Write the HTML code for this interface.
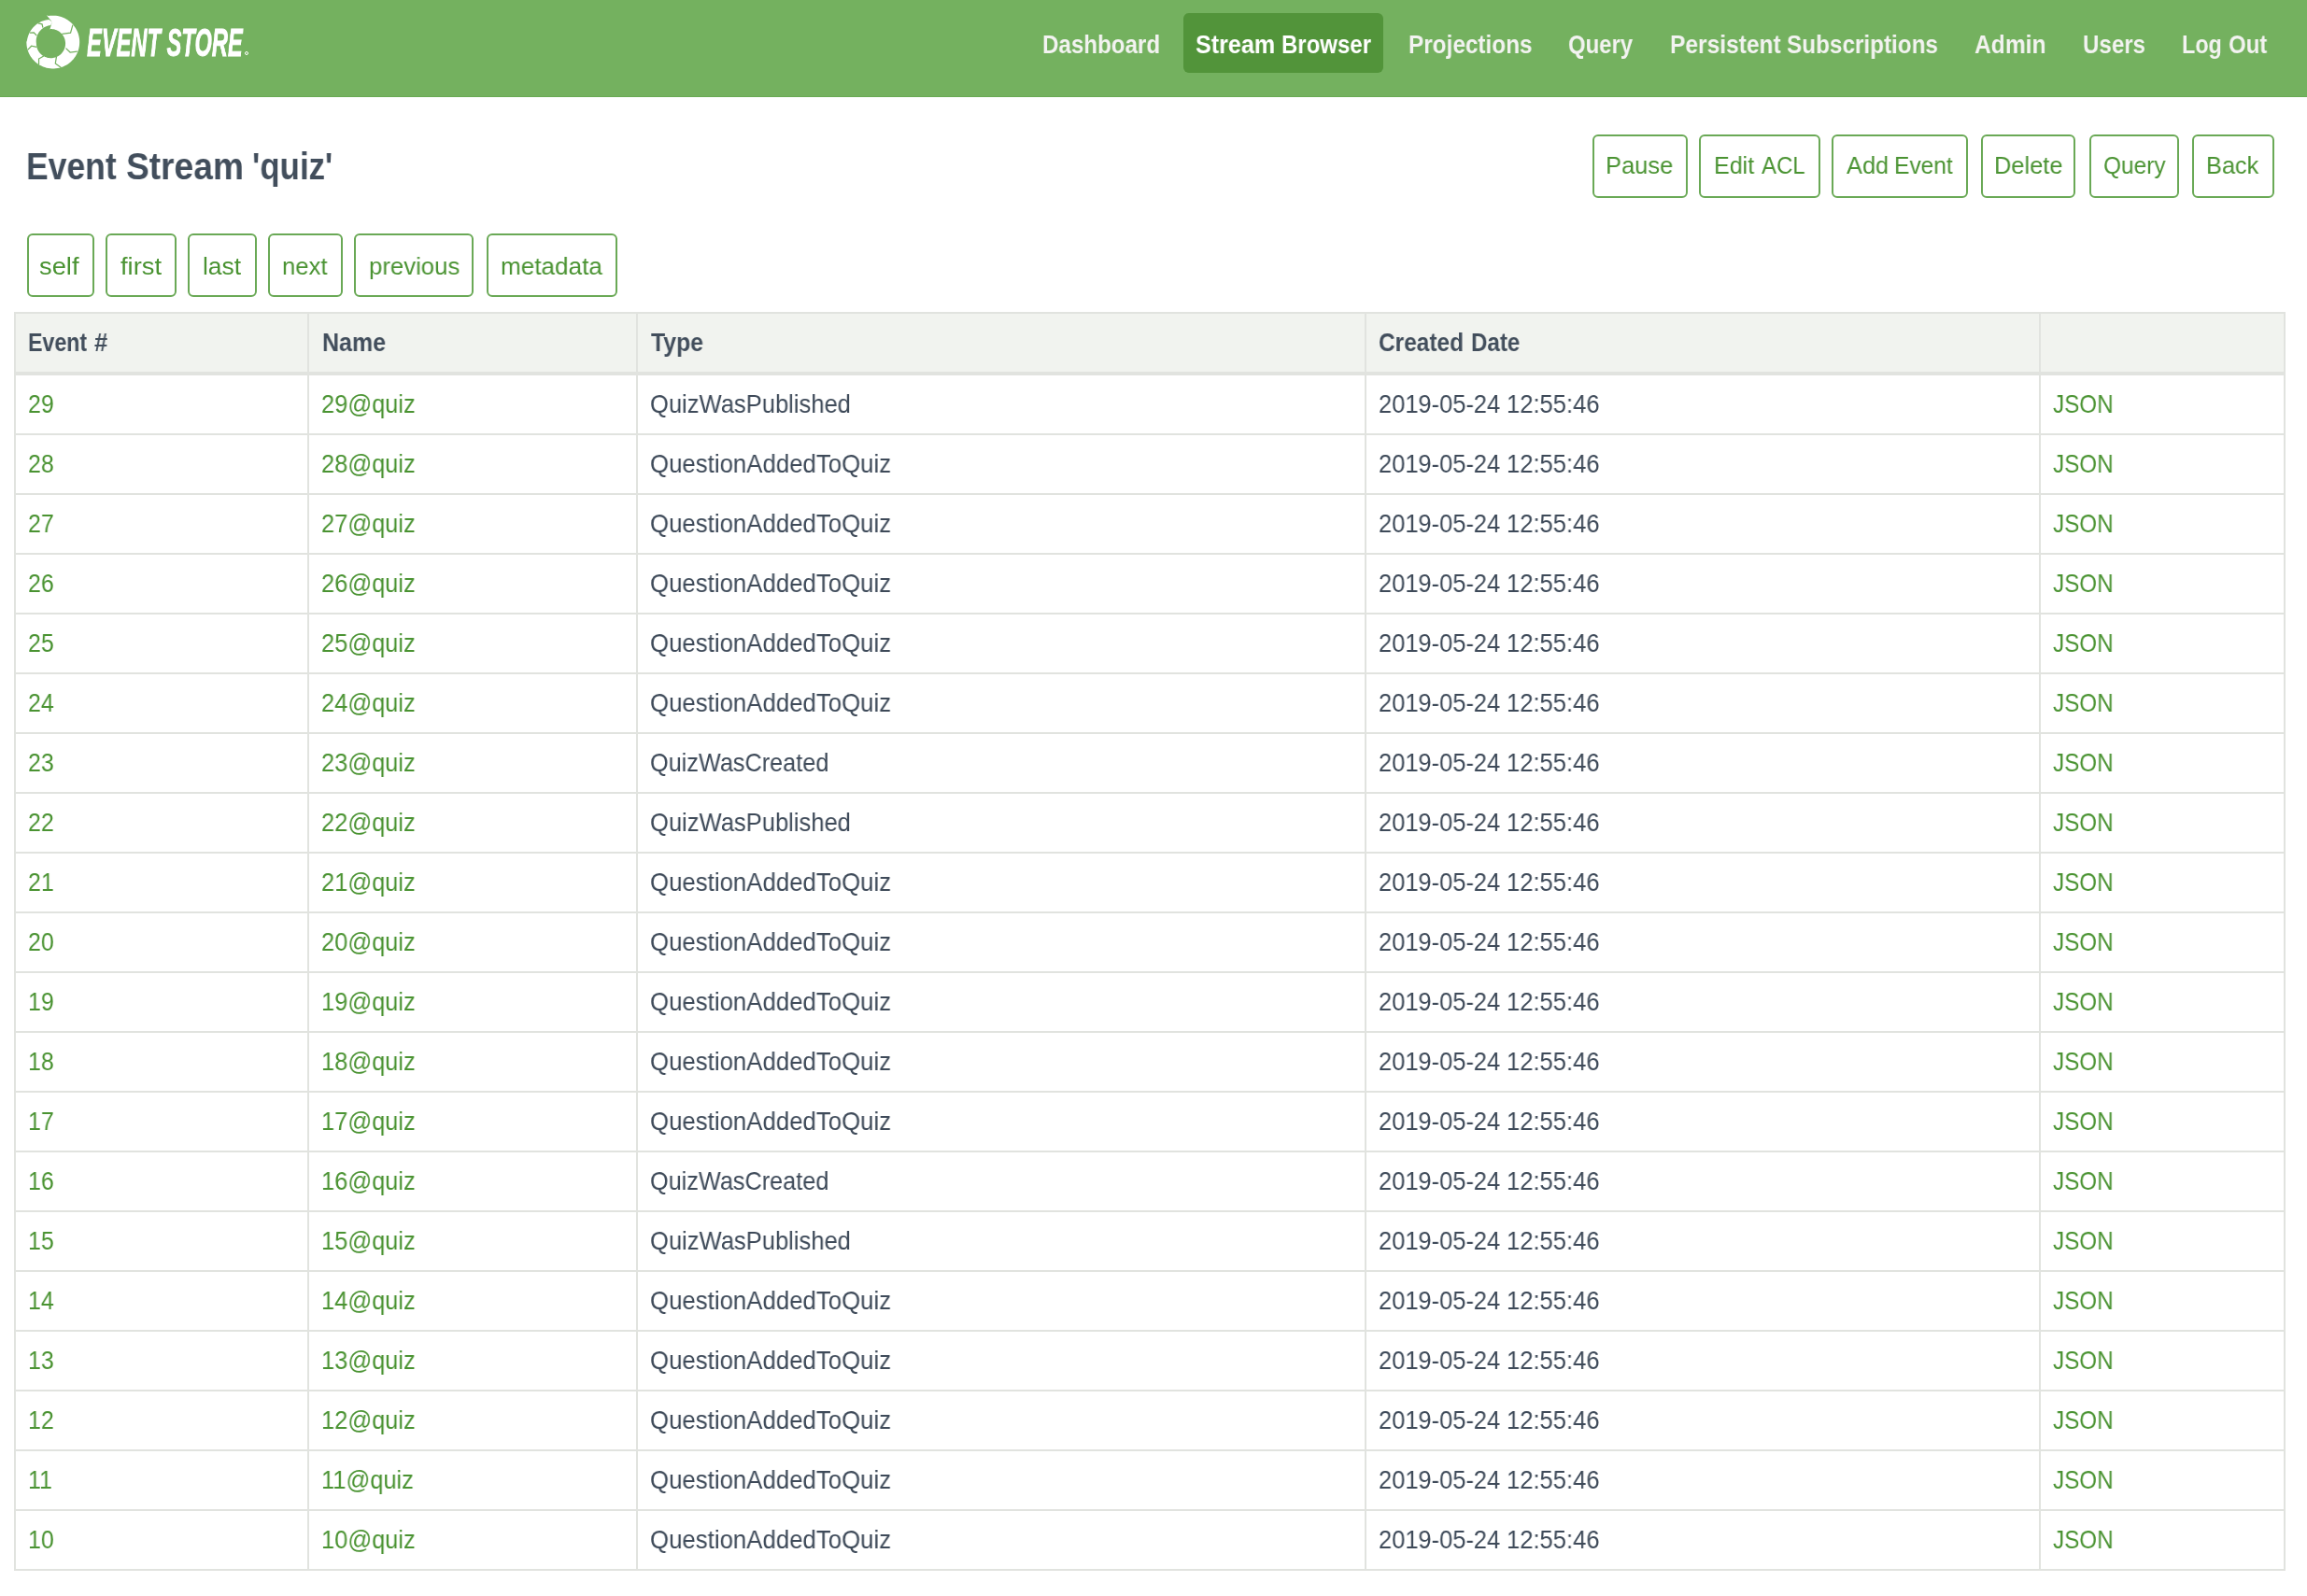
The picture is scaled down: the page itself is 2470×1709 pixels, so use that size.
<!DOCTYPE html>
<html><head><meta charset="utf-8"><style>
html,body{margin:0;padding:0;background:#fff;width:2470px;height:1709px;overflow:hidden;position:relative}
.t{position:absolute;white-space:nowrap;line-height:0;font-family:"Liberation Sans",sans-serif;transform-origin:0 0;will-change:transform}
.b{position:absolute}
</style></head><body>
<div class="b" style="left:0px;top:0px;width:2470px;height:103px;background:#74b15f"></div>
<div class="b" style="left:0px;top:103px;width:2470px;height:1px;background:#69aa54"></div>
<div class="b" style="left:1267px;top:14px;width:214px;height:64px;background:#52943a;border-radius:6px"></div>
<div class="t" style="left:1116.00px;top:46.53px;font-size:28.49px;font-weight:bold;color:#f3f3f1;transform:scaleX(0.8470)">Dashboard</div>
<div class="t" style="left:1279.90px;top:46.53px;font-size:28.49px;font-weight:bold;color:#ffffff;transform:scaleX(0.8815)">Stream</div>
<div class="t" style="left:1371.70px;top:46.53px;font-size:28.49px;font-weight:bold;color:#ffffff;transform:scaleX(0.8423)">Browser</div>
<div class="t" style="left:1508.00px;top:46.53px;font-size:28.49px;font-weight:bold;color:#f3f3f1;transform:scaleX(0.8542)">Projections</div>
<div class="t" style="left:1679.00px;top:46.53px;font-size:28.49px;font-weight:bold;color:#f3f3f1;transform:scaleX(0.8383)">Query</div>
<div class="t" style="left:1788.00px;top:46.53px;font-size:28.49px;font-weight:bold;color:#f3f3f1;transform:scaleX(0.8618)">Persistent</div>
<div class="t" style="left:1913.40px;top:46.53px;font-size:28.49px;font-weight:bold;color:#f3f3f1;transform:scaleX(0.8529)">Subscriptions</div>
<div class="t" style="left:2114.00px;top:46.53px;font-size:28.49px;font-weight:bold;color:#f3f3f1;transform:scaleX(0.8639)">Admin</div>
<div class="t" style="left:2230.00px;top:46.53px;font-size:28.49px;font-weight:bold;color:#f3f3f1;transform:scaleX(0.8470)">Users</div>
<div class="t" style="left:2336.20px;top:46.53px;font-size:28.49px;font-weight:bold;color:#f3f3f1;transform:scaleX(0.8194)">Log</div>
<div class="t" style="left:2386.30px;top:46.53px;font-size:28.49px;font-weight:bold;color:#f3f3f1;transform:scaleX(0.8426)">Out</div>
<div class="t" style="left:93.00px;top:45.70px;font-size:41.86px;font-weight:bold;font-style:italic;color:#ffffff;-webkit-text-stroke:0.9px #fff;transform:scaleX(0.5658)">EVENT STORE</div>
<div class="b" style="left:262px;top:55px;width:4px;height:4px;border:0.6px solid #fff;border-radius:50%;box-sizing:border-box"></div>
<div class="t" style="left:28.00px;top:178.20px;font-size:39.83px;font-weight:bold;color:#424e5c;transform:scaleX(0.8913)">Event</div>
<div class="t" style="left:135.00px;top:178.20px;font-size:39.83px;font-weight:bold;color:#424e5c;transform:scaleX(0.9319)">Stream</div>
<div class="t" style="left:270.30px;top:178.20px;font-size:39.83px;font-weight:bold;color:#424e5c;transform:scaleX(0.8754)">'quiz'</div>
<div class="b" style="left:1705px;top:144px;width:102px;height:68px;box-sizing:border-box;border:2px solid #6aa956;border-radius:6px"></div>
<div class="t" style="left:1719.40px;top:176.83px;font-size:26.45px;font-weight:normal;color:#4a9332;transform:scaleX(0.9642)">Pause</div>
<div class="b" style="left:1819px;top:144px;width:130px;height:68px;box-sizing:border-box;border:2px solid #6aa956;border-radius:6px"></div>
<div class="t" style="left:1834.50px;top:176.83px;font-size:26.45px;font-weight:normal;color:#4a9332;transform:scaleX(0.9470)">Edit</div>
<div class="t" style="left:1886.30px;top:176.83px;font-size:26.45px;font-weight:normal;color:#4a9332;transform:scaleX(0.9057)">ACL</div>
<div class="b" style="left:1961px;top:144px;width:146px;height:68px;box-sizing:border-box;border:2px solid #6aa956;border-radius:6px"></div>
<div class="t" style="left:1977.00px;top:176.83px;font-size:26.45px;font-weight:normal;color:#4a9332;transform:scaleX(0.9596)">Add</div>
<div class="t" style="left:2028.40px;top:176.83px;font-size:26.45px;font-weight:normal;color:#4a9332;transform:scaleX(0.9278)">Event</div>
<div class="b" style="left:2121px;top:144px;width:101px;height:68px;box-sizing:border-box;border:2px solid #6aa956;border-radius:6px"></div>
<div class="t" style="left:2135.00px;top:176.83px;font-size:26.45px;font-weight:normal;color:#4a9332;transform:scaleX(0.9613)">Delete</div>
<div class="b" style="left:2237px;top:144px;width:96px;height:68px;box-sizing:border-box;border:2px solid #6aa956;border-radius:6px"></div>
<div class="t" style="left:2252.20px;top:176.83px;font-size:26.45px;font-weight:normal;color:#4a9332;transform:scaleX(0.9249)">Query</div>
<div class="b" style="left:2347px;top:144px;width:88px;height:68px;box-sizing:border-box;border:2px solid #6aa956;border-radius:6px"></div>
<div class="t" style="left:2362.20px;top:176.83px;font-size:26.45px;font-weight:normal;color:#4a9332;transform:scaleX(0.9576)">Back</div>
<div class="b" style="left:29px;top:250px;width:72px;height:68px;box-sizing:border-box;border:2px solid #6aa956;border-radius:6px"></div>
<div class="t" style="left:42.30px;top:285.13px;font-size:26.45px;font-weight:normal;color:#4a9332;transform:scaleX(1.0321)">self</div>
<div class="b" style="left:113px;top:250px;width:75.5px;height:68px;box-sizing:border-box;border:2px solid #6aa956;border-radius:6px"></div>
<div class="t" style="left:129.00px;top:285.13px;font-size:26.45px;font-weight:normal;color:#4a9332;transform:scaleX(1.0325)">first</div>
<div class="b" style="left:201px;top:250px;width:73.69999999999999px;height:68px;box-sizing:border-box;border:2px solid #6aa956;border-radius:6px"></div>
<div class="t" style="left:216.80px;top:285.13px;font-size:26.45px;font-weight:normal;color:#4a9332;transform:scaleX(0.9945)">last</div>
<div class="b" style="left:287px;top:250px;width:80px;height:68px;box-sizing:border-box;border:2px solid #6aa956;border-radius:6px"></div>
<div class="t" style="left:301.80px;top:285.13px;font-size:26.45px;font-weight:normal;color:#4a9332;transform:scaleX(0.9686)">next</div>
<div class="b" style="left:379px;top:250px;width:128px;height:68px;box-sizing:border-box;border:2px solid #6aa956;border-radius:6px"></div>
<div class="t" style="left:395.20px;top:285.13px;font-size:26.45px;font-weight:normal;color:#4a9332;transform:scaleX(0.9734)">previous</div>
<div class="b" style="left:521px;top:250px;width:140px;height:68px;box-sizing:border-box;border:2px solid #6aa956;border-radius:6px"></div>
<div class="t" style="left:536.10px;top:285.13px;font-size:26.45px;font-weight:normal;color:#4a9332;transform:scaleX(0.9873)">metadata</div>
<div class="b" style="left:15px;top:334px;width:2432px;height:1348px;background:#fff;box-sizing:border-box;border:2px solid #e1e3df"></div>
<div class="b" style="left:17px;top:336px;width:2428px;height:62px;background:#f1f3ef"></div>
<div class="b" style="left:17px;top:398px;width:2428px;height:4px;background:#e1e3df"></div>
<div class="b" style="left:329px;top:336px;width:2px;height:1344px;background:#e1e3df"></div>
<div class="b" style="left:681px;top:336px;width:2px;height:1344px;background:#e1e3df"></div>
<div class="b" style="left:1461px;top:336px;width:2px;height:1344px;background:#e1e3df"></div>
<div class="b" style="left:2183px;top:336px;width:2px;height:1344px;background:#e1e3df"></div>
<div class="b" style="left:17px;top:464px;width:2428px;height:2px;background:#e1e3df"></div>
<div class="b" style="left:17px;top:528px;width:2428px;height:2px;background:#e1e3df"></div>
<div class="b" style="left:17px;top:592px;width:2428px;height:2px;background:#e1e3df"></div>
<div class="b" style="left:17px;top:656px;width:2428px;height:2px;background:#e1e3df"></div>
<div class="b" style="left:17px;top:720px;width:2428px;height:2px;background:#e1e3df"></div>
<div class="b" style="left:17px;top:784px;width:2428px;height:2px;background:#e1e3df"></div>
<div class="b" style="left:17px;top:848px;width:2428px;height:2px;background:#e1e3df"></div>
<div class="b" style="left:17px;top:912px;width:2428px;height:2px;background:#e1e3df"></div>
<div class="b" style="left:17px;top:976px;width:2428px;height:2px;background:#e1e3df"></div>
<div class="b" style="left:17px;top:1040px;width:2428px;height:2px;background:#e1e3df"></div>
<div class="b" style="left:17px;top:1104px;width:2428px;height:2px;background:#e1e3df"></div>
<div class="b" style="left:17px;top:1168px;width:2428px;height:2px;background:#e1e3df"></div>
<div class="b" style="left:17px;top:1232px;width:2428px;height:2px;background:#e1e3df"></div>
<div class="b" style="left:17px;top:1296px;width:2428px;height:2px;background:#e1e3df"></div>
<div class="b" style="left:17px;top:1360px;width:2428px;height:2px;background:#e1e3df"></div>
<div class="b" style="left:17px;top:1424px;width:2428px;height:2px;background:#e1e3df"></div>
<div class="b" style="left:17px;top:1488px;width:2428px;height:2px;background:#e1e3df"></div>
<div class="b" style="left:17px;top:1552px;width:2428px;height:2px;background:#e1e3df"></div>
<div class="b" style="left:17px;top:1616px;width:2428px;height:2px;background:#e1e3df"></div>
<div class="t" style="left:29.90px;top:366.63px;font-size:26.74px;font-weight:bold;color:#424e5c;transform:scaleX(0.8665)">Event</div>
<div class="t" style="left:101.40px;top:366.63px;font-size:26.74px;font-weight:bold;color:#424e5c;transform:scaleX(0.9618)">#</div>
<div class="t" style="left:344.70px;top:366.63px;font-size:26.74px;font-weight:bold;color:#424e5c;transform:scaleX(0.9338)">Name</div>
<div class="t" style="left:696.70px;top:366.63px;font-size:26.74px;font-weight:bold;color:#424e5c;transform:scaleX(0.9265)">Type</div>
<div class="t" style="left:1475.70px;top:366.63px;font-size:26.74px;font-weight:bold;color:#424e5c;transform:scaleX(0.9142)">Created</div>
<div class="t" style="left:1575.00px;top:366.63px;font-size:26.74px;font-weight:bold;color:#424e5c;transform:scaleX(0.9025)">Date</div>
<div class="t" style="left:30.35px;top:432.58px;font-size:26.89px;font-weight:normal;color:#4a9332;transform:scaleX(0.9266)">29</div>
<div class="t" style="left:344.00px;top:432.58px;font-size:26.89px;font-weight:normal;color:#4a9332;transform:scaleX(0.9462)">29@quiz</div>
<div class="t" style="left:696.10px;top:432.58px;font-size:26.89px;font-weight:normal;color:#3e4a59;transform:scaleX(0.9507)">QuizWasPublished</div>
<div class="t" style="left:1475.70px;top:432.58px;font-size:26.89px;font-weight:normal;color:#3e4a59;transform:scaleX(0.9467)">2019-05-24</div>
<div class="t" style="left:1613.20px;top:432.58px;font-size:26.89px;font-weight:normal;color:#3e4a59;transform:scaleX(0.9510)">12:55:46</div>
<div class="t" style="left:2198.40px;top:432.58px;font-size:26.89px;font-weight:normal;color:#4a9332;transform:scaleX(0.9028)">JSON</div>
<div class="t" style="left:30.35px;top:496.58px;font-size:26.89px;font-weight:normal;color:#4a9332;transform:scaleX(0.9266)">28</div>
<div class="t" style="left:344.00px;top:496.58px;font-size:26.89px;font-weight:normal;color:#4a9332;transform:scaleX(0.9462)">28@quiz</div>
<div class="t" style="left:696.10px;top:496.58px;font-size:26.89px;font-weight:normal;color:#3e4a59;transform:scaleX(0.9597)">QuestionAddedToQuiz</div>
<div class="t" style="left:1475.70px;top:496.58px;font-size:26.89px;font-weight:normal;color:#3e4a59;transform:scaleX(0.9467)">2019-05-24</div>
<div class="t" style="left:1613.20px;top:496.58px;font-size:26.89px;font-weight:normal;color:#3e4a59;transform:scaleX(0.9510)">12:55:46</div>
<div class="t" style="left:2198.40px;top:496.58px;font-size:26.89px;font-weight:normal;color:#4a9332;transform:scaleX(0.9028)">JSON</div>
<div class="t" style="left:30.35px;top:560.58px;font-size:26.89px;font-weight:normal;color:#4a9332;transform:scaleX(0.9266)">27</div>
<div class="t" style="left:344.00px;top:560.58px;font-size:26.89px;font-weight:normal;color:#4a9332;transform:scaleX(0.9462)">27@quiz</div>
<div class="t" style="left:696.10px;top:560.58px;font-size:26.89px;font-weight:normal;color:#3e4a59;transform:scaleX(0.9597)">QuestionAddedToQuiz</div>
<div class="t" style="left:1475.70px;top:560.58px;font-size:26.89px;font-weight:normal;color:#3e4a59;transform:scaleX(0.9467)">2019-05-24</div>
<div class="t" style="left:1613.20px;top:560.58px;font-size:26.89px;font-weight:normal;color:#3e4a59;transform:scaleX(0.9510)">12:55:46</div>
<div class="t" style="left:2198.40px;top:560.58px;font-size:26.89px;font-weight:normal;color:#4a9332;transform:scaleX(0.9028)">JSON</div>
<div class="t" style="left:30.35px;top:624.58px;font-size:26.89px;font-weight:normal;color:#4a9332;transform:scaleX(0.9266)">26</div>
<div class="t" style="left:344.00px;top:624.58px;font-size:26.89px;font-weight:normal;color:#4a9332;transform:scaleX(0.9462)">26@quiz</div>
<div class="t" style="left:696.10px;top:624.58px;font-size:26.89px;font-weight:normal;color:#3e4a59;transform:scaleX(0.9597)">QuestionAddedToQuiz</div>
<div class="t" style="left:1475.70px;top:624.58px;font-size:26.89px;font-weight:normal;color:#3e4a59;transform:scaleX(0.9467)">2019-05-24</div>
<div class="t" style="left:1613.20px;top:624.58px;font-size:26.89px;font-weight:normal;color:#3e4a59;transform:scaleX(0.9510)">12:55:46</div>
<div class="t" style="left:2198.40px;top:624.58px;font-size:26.89px;font-weight:normal;color:#4a9332;transform:scaleX(0.9028)">JSON</div>
<div class="t" style="left:30.35px;top:688.58px;font-size:26.89px;font-weight:normal;color:#4a9332;transform:scaleX(0.9266)">25</div>
<div class="t" style="left:344.00px;top:688.58px;font-size:26.89px;font-weight:normal;color:#4a9332;transform:scaleX(0.9462)">25@quiz</div>
<div class="t" style="left:696.10px;top:688.58px;font-size:26.89px;font-weight:normal;color:#3e4a59;transform:scaleX(0.9597)">QuestionAddedToQuiz</div>
<div class="t" style="left:1475.70px;top:688.58px;font-size:26.89px;font-weight:normal;color:#3e4a59;transform:scaleX(0.9467)">2019-05-24</div>
<div class="t" style="left:1613.20px;top:688.58px;font-size:26.89px;font-weight:normal;color:#3e4a59;transform:scaleX(0.9510)">12:55:46</div>
<div class="t" style="left:2198.40px;top:688.58px;font-size:26.89px;font-weight:normal;color:#4a9332;transform:scaleX(0.9028)">JSON</div>
<div class="t" style="left:30.35px;top:752.58px;font-size:26.89px;font-weight:normal;color:#4a9332;transform:scaleX(0.9266)">24</div>
<div class="t" style="left:344.00px;top:752.58px;font-size:26.89px;font-weight:normal;color:#4a9332;transform:scaleX(0.9462)">24@quiz</div>
<div class="t" style="left:696.10px;top:752.58px;font-size:26.89px;font-weight:normal;color:#3e4a59;transform:scaleX(0.9597)">QuestionAddedToQuiz</div>
<div class="t" style="left:1475.70px;top:752.58px;font-size:26.89px;font-weight:normal;color:#3e4a59;transform:scaleX(0.9467)">2019-05-24</div>
<div class="t" style="left:1613.20px;top:752.58px;font-size:26.89px;font-weight:normal;color:#3e4a59;transform:scaleX(0.9510)">12:55:46</div>
<div class="t" style="left:2198.40px;top:752.58px;font-size:26.89px;font-weight:normal;color:#4a9332;transform:scaleX(0.9028)">JSON</div>
<div class="t" style="left:30.35px;top:816.58px;font-size:26.89px;font-weight:normal;color:#4a9332;transform:scaleX(0.9266)">23</div>
<div class="t" style="left:344.00px;top:816.58px;font-size:26.89px;font-weight:normal;color:#4a9332;transform:scaleX(0.9462)">23@quiz</div>
<div class="t" style="left:696.10px;top:816.58px;font-size:26.89px;font-weight:normal;color:#3e4a59;transform:scaleX(0.9396)">QuizWasCreated</div>
<div class="t" style="left:1475.70px;top:816.58px;font-size:26.89px;font-weight:normal;color:#3e4a59;transform:scaleX(0.9467)">2019-05-24</div>
<div class="t" style="left:1613.20px;top:816.58px;font-size:26.89px;font-weight:normal;color:#3e4a59;transform:scaleX(0.9510)">12:55:46</div>
<div class="t" style="left:2198.40px;top:816.58px;font-size:26.89px;font-weight:normal;color:#4a9332;transform:scaleX(0.9028)">JSON</div>
<div class="t" style="left:30.35px;top:880.58px;font-size:26.89px;font-weight:normal;color:#4a9332;transform:scaleX(0.9266)">22</div>
<div class="t" style="left:344.00px;top:880.58px;font-size:26.89px;font-weight:normal;color:#4a9332;transform:scaleX(0.9462)">22@quiz</div>
<div class="t" style="left:696.10px;top:880.58px;font-size:26.89px;font-weight:normal;color:#3e4a59;transform:scaleX(0.9507)">QuizWasPublished</div>
<div class="t" style="left:1475.70px;top:880.58px;font-size:26.89px;font-weight:normal;color:#3e4a59;transform:scaleX(0.9467)">2019-05-24</div>
<div class="t" style="left:1613.20px;top:880.58px;font-size:26.89px;font-weight:normal;color:#3e4a59;transform:scaleX(0.9510)">12:55:46</div>
<div class="t" style="left:2198.40px;top:880.58px;font-size:26.89px;font-weight:normal;color:#4a9332;transform:scaleX(0.9028)">JSON</div>
<div class="t" style="left:30.35px;top:944.58px;font-size:26.89px;font-weight:normal;color:#4a9332;transform:scaleX(0.9266)">21</div>
<div class="t" style="left:344.00px;top:944.58px;font-size:26.89px;font-weight:normal;color:#4a9332;transform:scaleX(0.9462)">21@quiz</div>
<div class="t" style="left:696.10px;top:944.58px;font-size:26.89px;font-weight:normal;color:#3e4a59;transform:scaleX(0.9597)">QuestionAddedToQuiz</div>
<div class="t" style="left:1475.70px;top:944.58px;font-size:26.89px;font-weight:normal;color:#3e4a59;transform:scaleX(0.9467)">2019-05-24</div>
<div class="t" style="left:1613.20px;top:944.58px;font-size:26.89px;font-weight:normal;color:#3e4a59;transform:scaleX(0.9510)">12:55:46</div>
<div class="t" style="left:2198.40px;top:944.58px;font-size:26.89px;font-weight:normal;color:#4a9332;transform:scaleX(0.9028)">JSON</div>
<div class="t" style="left:30.35px;top:1008.58px;font-size:26.89px;font-weight:normal;color:#4a9332;transform:scaleX(0.9266)">20</div>
<div class="t" style="left:344.00px;top:1008.58px;font-size:26.89px;font-weight:normal;color:#4a9332;transform:scaleX(0.9462)">20@quiz</div>
<div class="t" style="left:696.10px;top:1008.58px;font-size:26.89px;font-weight:normal;color:#3e4a59;transform:scaleX(0.9597)">QuestionAddedToQuiz</div>
<div class="t" style="left:1475.70px;top:1008.58px;font-size:26.89px;font-weight:normal;color:#3e4a59;transform:scaleX(0.9467)">2019-05-24</div>
<div class="t" style="left:1613.20px;top:1008.58px;font-size:26.89px;font-weight:normal;color:#3e4a59;transform:scaleX(0.9510)">12:55:46</div>
<div class="t" style="left:2198.40px;top:1008.58px;font-size:26.89px;font-weight:normal;color:#4a9332;transform:scaleX(0.9028)">JSON</div>
<div class="t" style="left:30.35px;top:1072.58px;font-size:26.89px;font-weight:normal;color:#4a9332;transform:scaleX(0.9266)">19</div>
<div class="t" style="left:344.00px;top:1072.58px;font-size:26.89px;font-weight:normal;color:#4a9332;transform:scaleX(0.9462)">19@quiz</div>
<div class="t" style="left:696.10px;top:1072.58px;font-size:26.89px;font-weight:normal;color:#3e4a59;transform:scaleX(0.9597)">QuestionAddedToQuiz</div>
<div class="t" style="left:1475.70px;top:1072.58px;font-size:26.89px;font-weight:normal;color:#3e4a59;transform:scaleX(0.9467)">2019-05-24</div>
<div class="t" style="left:1613.20px;top:1072.58px;font-size:26.89px;font-weight:normal;color:#3e4a59;transform:scaleX(0.9510)">12:55:46</div>
<div class="t" style="left:2198.40px;top:1072.58px;font-size:26.89px;font-weight:normal;color:#4a9332;transform:scaleX(0.9028)">JSON</div>
<div class="t" style="left:30.35px;top:1136.58px;font-size:26.89px;font-weight:normal;color:#4a9332;transform:scaleX(0.9266)">18</div>
<div class="t" style="left:344.00px;top:1136.58px;font-size:26.89px;font-weight:normal;color:#4a9332;transform:scaleX(0.9462)">18@quiz</div>
<div class="t" style="left:696.10px;top:1136.58px;font-size:26.89px;font-weight:normal;color:#3e4a59;transform:scaleX(0.9597)">QuestionAddedToQuiz</div>
<div class="t" style="left:1475.70px;top:1136.58px;font-size:26.89px;font-weight:normal;color:#3e4a59;transform:scaleX(0.9467)">2019-05-24</div>
<div class="t" style="left:1613.20px;top:1136.58px;font-size:26.89px;font-weight:normal;color:#3e4a59;transform:scaleX(0.9510)">12:55:46</div>
<div class="t" style="left:2198.40px;top:1136.58px;font-size:26.89px;font-weight:normal;color:#4a9332;transform:scaleX(0.9028)">JSON</div>
<div class="t" style="left:30.35px;top:1200.58px;font-size:26.89px;font-weight:normal;color:#4a9332;transform:scaleX(0.9266)">17</div>
<div class="t" style="left:344.00px;top:1200.58px;font-size:26.89px;font-weight:normal;color:#4a9332;transform:scaleX(0.9462)">17@quiz</div>
<div class="t" style="left:696.10px;top:1200.58px;font-size:26.89px;font-weight:normal;color:#3e4a59;transform:scaleX(0.9597)">QuestionAddedToQuiz</div>
<div class="t" style="left:1475.70px;top:1200.58px;font-size:26.89px;font-weight:normal;color:#3e4a59;transform:scaleX(0.9467)">2019-05-24</div>
<div class="t" style="left:1613.20px;top:1200.58px;font-size:26.89px;font-weight:normal;color:#3e4a59;transform:scaleX(0.9510)">12:55:46</div>
<div class="t" style="left:2198.40px;top:1200.58px;font-size:26.89px;font-weight:normal;color:#4a9332;transform:scaleX(0.9028)">JSON</div>
<div class="t" style="left:30.35px;top:1264.58px;font-size:26.89px;font-weight:normal;color:#4a9332;transform:scaleX(0.9266)">16</div>
<div class="t" style="left:344.00px;top:1264.58px;font-size:26.89px;font-weight:normal;color:#4a9332;transform:scaleX(0.9462)">16@quiz</div>
<div class="t" style="left:696.10px;top:1264.58px;font-size:26.89px;font-weight:normal;color:#3e4a59;transform:scaleX(0.9396)">QuizWasCreated</div>
<div class="t" style="left:1475.70px;top:1264.58px;font-size:26.89px;font-weight:normal;color:#3e4a59;transform:scaleX(0.9467)">2019-05-24</div>
<div class="t" style="left:1613.20px;top:1264.58px;font-size:26.89px;font-weight:normal;color:#3e4a59;transform:scaleX(0.9510)">12:55:46</div>
<div class="t" style="left:2198.40px;top:1264.58px;font-size:26.89px;font-weight:normal;color:#4a9332;transform:scaleX(0.9028)">JSON</div>
<div class="t" style="left:30.35px;top:1328.58px;font-size:26.89px;font-weight:normal;color:#4a9332;transform:scaleX(0.9266)">15</div>
<div class="t" style="left:344.00px;top:1328.58px;font-size:26.89px;font-weight:normal;color:#4a9332;transform:scaleX(0.9462)">15@quiz</div>
<div class="t" style="left:696.10px;top:1328.58px;font-size:26.89px;font-weight:normal;color:#3e4a59;transform:scaleX(0.9507)">QuizWasPublished</div>
<div class="t" style="left:1475.70px;top:1328.58px;font-size:26.89px;font-weight:normal;color:#3e4a59;transform:scaleX(0.9467)">2019-05-24</div>
<div class="t" style="left:1613.20px;top:1328.58px;font-size:26.89px;font-weight:normal;color:#3e4a59;transform:scaleX(0.9510)">12:55:46</div>
<div class="t" style="left:2198.40px;top:1328.58px;font-size:26.89px;font-weight:normal;color:#4a9332;transform:scaleX(0.9028)">JSON</div>
<div class="t" style="left:30.35px;top:1392.58px;font-size:26.89px;font-weight:normal;color:#4a9332;transform:scaleX(0.9266)">14</div>
<div class="t" style="left:344.00px;top:1392.58px;font-size:26.89px;font-weight:normal;color:#4a9332;transform:scaleX(0.9462)">14@quiz</div>
<div class="t" style="left:696.10px;top:1392.58px;font-size:26.89px;font-weight:normal;color:#3e4a59;transform:scaleX(0.9597)">QuestionAddedToQuiz</div>
<div class="t" style="left:1475.70px;top:1392.58px;font-size:26.89px;font-weight:normal;color:#3e4a59;transform:scaleX(0.9467)">2019-05-24</div>
<div class="t" style="left:1613.20px;top:1392.58px;font-size:26.89px;font-weight:normal;color:#3e4a59;transform:scaleX(0.9510)">12:55:46</div>
<div class="t" style="left:2198.40px;top:1392.58px;font-size:26.89px;font-weight:normal;color:#4a9332;transform:scaleX(0.9028)">JSON</div>
<div class="t" style="left:30.35px;top:1456.58px;font-size:26.89px;font-weight:normal;color:#4a9332;transform:scaleX(0.9266)">13</div>
<div class="t" style="left:344.00px;top:1456.58px;font-size:26.89px;font-weight:normal;color:#4a9332;transform:scaleX(0.9462)">13@quiz</div>
<div class="t" style="left:696.10px;top:1456.58px;font-size:26.89px;font-weight:normal;color:#3e4a59;transform:scaleX(0.9597)">QuestionAddedToQuiz</div>
<div class="t" style="left:1475.70px;top:1456.58px;font-size:26.89px;font-weight:normal;color:#3e4a59;transform:scaleX(0.9467)">2019-05-24</div>
<div class="t" style="left:1613.20px;top:1456.58px;font-size:26.89px;font-weight:normal;color:#3e4a59;transform:scaleX(0.9510)">12:55:46</div>
<div class="t" style="left:2198.40px;top:1456.58px;font-size:26.89px;font-weight:normal;color:#4a9332;transform:scaleX(0.9028)">JSON</div>
<div class="t" style="left:30.35px;top:1520.58px;font-size:26.89px;font-weight:normal;color:#4a9332;transform:scaleX(0.9266)">12</div>
<div class="t" style="left:344.00px;top:1520.58px;font-size:26.89px;font-weight:normal;color:#4a9332;transform:scaleX(0.9462)">12@quiz</div>
<div class="t" style="left:696.10px;top:1520.58px;font-size:26.89px;font-weight:normal;color:#3e4a59;transform:scaleX(0.9597)">QuestionAddedToQuiz</div>
<div class="t" style="left:1475.70px;top:1520.58px;font-size:26.89px;font-weight:normal;color:#3e4a59;transform:scaleX(0.9467)">2019-05-24</div>
<div class="t" style="left:1613.20px;top:1520.58px;font-size:26.89px;font-weight:normal;color:#3e4a59;transform:scaleX(0.9510)">12:55:46</div>
<div class="t" style="left:2198.40px;top:1520.58px;font-size:26.89px;font-weight:normal;color:#4a9332;transform:scaleX(0.9028)">JSON</div>
<div class="t" style="left:30.35px;top:1584.58px;font-size:26.89px;font-weight:normal;color:#4a9332;transform:scaleX(0.9266)">11</div>
<div class="t" style="left:344.00px;top:1584.58px;font-size:26.89px;font-weight:normal;color:#4a9332;transform:scaleX(0.9462)">11@quiz</div>
<div class="t" style="left:696.10px;top:1584.58px;font-size:26.89px;font-weight:normal;color:#3e4a59;transform:scaleX(0.9597)">QuestionAddedToQuiz</div>
<div class="t" style="left:1475.70px;top:1584.58px;font-size:26.89px;font-weight:normal;color:#3e4a59;transform:scaleX(0.9467)">2019-05-24</div>
<div class="t" style="left:1613.20px;top:1584.58px;font-size:26.89px;font-weight:normal;color:#3e4a59;transform:scaleX(0.9510)">12:55:46</div>
<div class="t" style="left:2198.40px;top:1584.58px;font-size:26.89px;font-weight:normal;color:#4a9332;transform:scaleX(0.9028)">JSON</div>
<div class="t" style="left:30.35px;top:1648.58px;font-size:26.89px;font-weight:normal;color:#4a9332;transform:scaleX(0.9266)">10</div>
<div class="t" style="left:344.00px;top:1648.58px;font-size:26.89px;font-weight:normal;color:#4a9332;transform:scaleX(0.9462)">10@quiz</div>
<div class="t" style="left:696.10px;top:1648.58px;font-size:26.89px;font-weight:normal;color:#3e4a59;transform:scaleX(0.9597)">QuestionAddedToQuiz</div>
<div class="t" style="left:1475.70px;top:1648.58px;font-size:26.89px;font-weight:normal;color:#3e4a59;transform:scaleX(0.9467)">2019-05-24</div>
<div class="t" style="left:1613.20px;top:1648.58px;font-size:26.89px;font-weight:normal;color:#3e4a59;transform:scaleX(0.9510)">12:55:46</div>
<div class="t" style="left:2198.40px;top:1648.58px;font-size:26.89px;font-weight:normal;color:#4a9332;transform:scaleX(0.9028)">JSON</div>
<svg style="position:absolute;left:24px;top:10px" width="70" height="70" viewBox="0 0 1596 1596"><path fill="#fff" d="M590,140 L634,162 L679,156 L724,152 L770,152 L815,156 L860,162 L904,171 L947,184 L990,199 L1031,218 L1071,239 L1109,263 L1146,289 L1181,318 L1213,350 L1243,383 L1271,419 L1297,457 L1319,496 L1339,536 L1356,578 L1370,621 L1381,665 L1389,710 L1393,755 L1395,800 L1393,845 L1389,890 L1381,935 L1370,979 L1356,1022 L1339,1064 L1319,1104 L1297,1143 L1271,1181 L1243,1217 L1213,1250 L1181,1282 L1146,1311 L1109,1337 L1071,1361 L1031,1382 L990,1401 L947,1416 L904,1429 L860,1438 L815,1444 L770,1448 L724,1448 L679,1444 L634,1438 L590,1429 L547,1416 L504,1401 L463,1382 L423,1361 L385,1337 L348,1311 L313,1282 L281,1250 L251,1217 L223,1181 L197,1143 L175,1104 L155,1064 L138,1022 L124,979 L113,935 L105,890 L101,845 L99,800 L113,756 L121,712 L133,670 L148,628 L165,588 L185,550 L207,513 L232,478 L259,446 L288,415 L319,387 L352,361 L386,338 L421,317 L458,299 L495,284 L533,272 L572,262 L611,255 L650,251 L650,250 L725,305 L690,385 L687,385 L656,391 L626,399 L597,409 L568,421 L541,435 L516,450 L491,468 L469,486 L447,506 L428,528 L410,550 L394,573 L380,598 L368,622 L357,648 L349,674 L343,700 L338,726 L336,752 L335,778 L336,804 L339,829 L340,854 L343,878 L347,903 L352,927 L359,951 L368,974 L379,996 L391,1018 L404,1039 L419,1058 L435,1077 L453,1095 L472,1111 L491,1126 L512,1139 L534,1151 L556,1162 L579,1171 L603,1178 L627,1183 L652,1187 L676,1190 L701,1190 L726,1189 L751,1186 L775,1181 L799,1174 L822,1166 L845,1157 L867,1145 L888,1133 L909,1119 L928,1103 L946,1086 L963,1068 L979,1049 L993,1028 L1005,1007 L1017,985 L1026,962 L1034,939 L1041,915 L1046,891 L1049,866 L1050,841 L1050,816 L1047,792 L1043,767 L1038,743 L1031,719 L1022,696 L1011,674 L999,652 L986,631 L971,612 L955,593 L937,575 L918,559 L899,544 L878,531 L856,519 L834,508 L811,499 L787,492 L763,487 L738,483 L714,480 L689,480 L670,490 L725,305Z"/><g fill="none" stroke="#74b15f" stroke-width="28"><polyline points="1230,380 1175,575 965,600"/><polyline points="1060,950 1165,1050 1340,1030"/><polyline points="940,1420 805,1320 830,1160"/><polyline points="400,1350 400,1210 520,1140"/><polyline points="130,990 220,895 350,920"/><polyline points="180,575 280,570 350,640"/><polyline points="380,340 480,360 500,450"/></g></svg>
</body></html>
